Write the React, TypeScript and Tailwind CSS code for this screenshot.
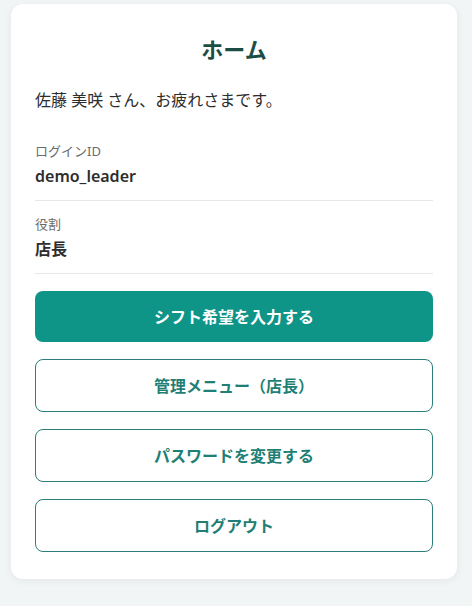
import React from 'react';

const font = { fontFamily: '"Noto Sans", "Noto Sans CJK JP", sans-serif' };

const outlineButton =
  'w-full h-[53px] rounded-lg border border-[#2b7f7a] bg-white text-[#1f7f75] text-[16px] font-bold';

const App: React.FC = () => {
  const menu = ['管理メニュー（店長）', 'パスワードを変更する', 'ログアウト'];

  return (
    <div className="min-h-[606px] w-[472px] bg-[#f1f5f5] pt-[4px]" style={font}>
      <div className="ml-[11px] w-[446px] rounded-xl bg-white px-6 pt-[29px] pb-[27px] shadow-[0_2px_8px_rgba(0,0,0,0.06)]">
        {/* Title */}
        <h1 className="text-center text-[22px] leading-[32px] font-bold text-[#1c4d45]">ホーム</h1>

        <p className="mt-[23px] text-[16px] leading-[24px] text-[#2d2d2d]">
          佐藤 美咲 さん、お疲れさまです。
        </p>

        {/* Info */}
        <div className="mt-[29px]">
          <div className="border-b border-[#e5e7eb] pb-[12px]">
            <p className="text-[13px] leading-[20px] text-[#6b6b6b]">ログインID</p>
            <p className="mt-[3px] text-[16px] leading-[24px] font-semibold text-[#2d2d2d]">demo_leader</p>
          </div>
          <div className="border-b border-[#e5e7eb] pt-[13px] pb-[12px]">
            <p className="text-[13px] leading-[20px] text-[#6b6b6b]">役割</p>
            <p className="mt-[3px] text-[16px] leading-[24px] font-bold text-[#2d2d2d]">店長</p>
          </div>
        </div>

        {/* Actions */}
        <div className="mt-[17px] flex flex-col gap-[17px]">
          <button className="w-full h-[51px] rounded-lg bg-[#0f9488] text-white text-[16px] font-bold">
            シフト希望を入力する
          </button>
          {menu.map((label) => (
            <button key={label} className={outlineButton}>
              {label}
            </button>
          ))}
        </div>
      </div>
    </div>
  );
};

export default App;
